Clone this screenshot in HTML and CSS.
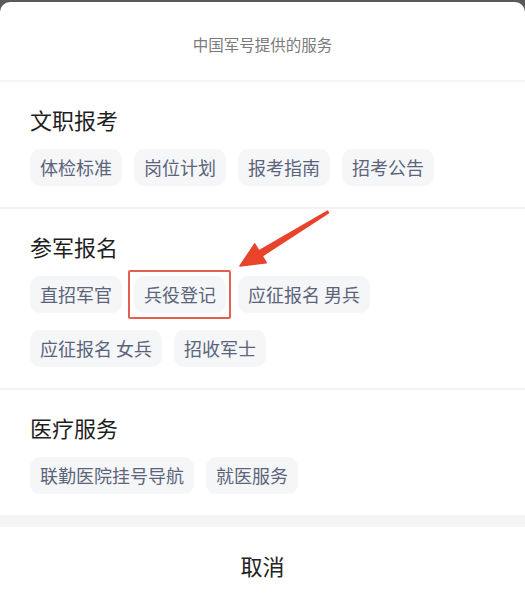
FILE: index.html
```html
<!DOCTYPE html>
<html lang="zh-CN">
<head>
  <meta charset="UTF-8">
  <meta name="viewport" content="width=device-width, initial-scale=1.0">
  <title>中国军号提供的服务</title>
  <link rel="stylesheet" href="styles.css">
</head>
<body>

  <!-- Service sheet -->
  <div class="sheet">
    <div class="sheet-title">中国军号提供的服务</div>

    <div class="group">
      <h3 class="group-name">文职报考</h3>
      <div class="chips">
        <span class="chip">体检标准</span>
        <span class="chip">岗位计划</span>
        <span class="chip">报考指南</span>
        <span class="chip">招考公告</span>
      </div>
    </div>

    <div class="group">
      <h3 class="group-name">参军报名</h3>
      <div class="chips">
        <span class="chip">直招军官</span>
        <span class="chip chip-marked">兵役登记</span>
        <span class="chip">应征报名 男兵</span>
        <span class="chip">应征报名 女兵</span>
        <span class="chip">招收军士</span>
      </div>
    </div>

    <div class="group group-last">
      <h3 class="group-name">医疗服务</h3>
      <div class="chips">
        <span class="chip">联勤医院挂号导航</span>
        <span class="chip">就医服务</span>
      </div>
    </div>

    <div class="cancel">取消</div>

    <!-- annotation arrow -->
    <svg class="arrow" width="110" height="80" viewBox="0 0 110 80">
      <polygon points="97.5,11.1 28.9,50.8 24.7,44 10,66 36.3,62.8 32.1,56 98.5,12.9"
               fill="#e8432b" stroke="#e8432b" stroke-width="1.5" stroke-linejoin="round"/>
    </svg>
  </div>

</body>
</html>
```

FILE: styles.css
```css
    body {
      margin: 0;
      background-color: #5a5a5a;
      font-family: "Noto Sans CJK SC", "Noto Sans", sans-serif;
      overflow: hidden;
    }

    .sheet {
      position: relative;
      margin-top: 2px;
      background-color: #fff;
      border-radius: 10px 10px 0 0;
      min-height: 593px;
    }

    .sheet-title {
      height: 78px;
      line-height: 84px;
      text-align: center;
      font-size: 15.5px;
      color: #7a7a7a;
      border-bottom: 2px solid #f4f4f4;
    }

    .group {
      padding: 22px 30px 21px;
      border-bottom: 2px solid #f3f3f3;
    }

    .group-last {
      border-bottom: 12px solid #f5f5f5;
    }

    .group-name {
      margin: 0 0 15px;
      font-size: 22px;
      font-weight: normal;
      line-height: 30px;
      color: #1e1e1e;
    }

    .chips {
      display: flex;
      flex-wrap: wrap;
      gap: 17px 12px;
    }

    .chip {
      position: relative;
      display: inline-block;
      height: 37px;
      line-height: 37px;
      padding: 0 10px;
      font-size: 18px;
      color: #5b647b;
      background-color: #f5f6f8;
      border-radius: 10px;
      white-space: pre;
    }

    /* red annotation box */
    .chip-marked::after {
      content: "";
      position: absolute;
      top: -6px;
      bottom: -6px;
      left: -6px;
      right: -5px;
      border: 2px solid #e2604f;
      border-radius: 2px;
    }

    .cancel {
      height: 76px;
      line-height: 76px;
      text-align: center;
      font-size: 22px;
      color: #222;
    }

    .arrow {
      position: absolute;
      left: 230px;
      top: 198px;
    }
```
